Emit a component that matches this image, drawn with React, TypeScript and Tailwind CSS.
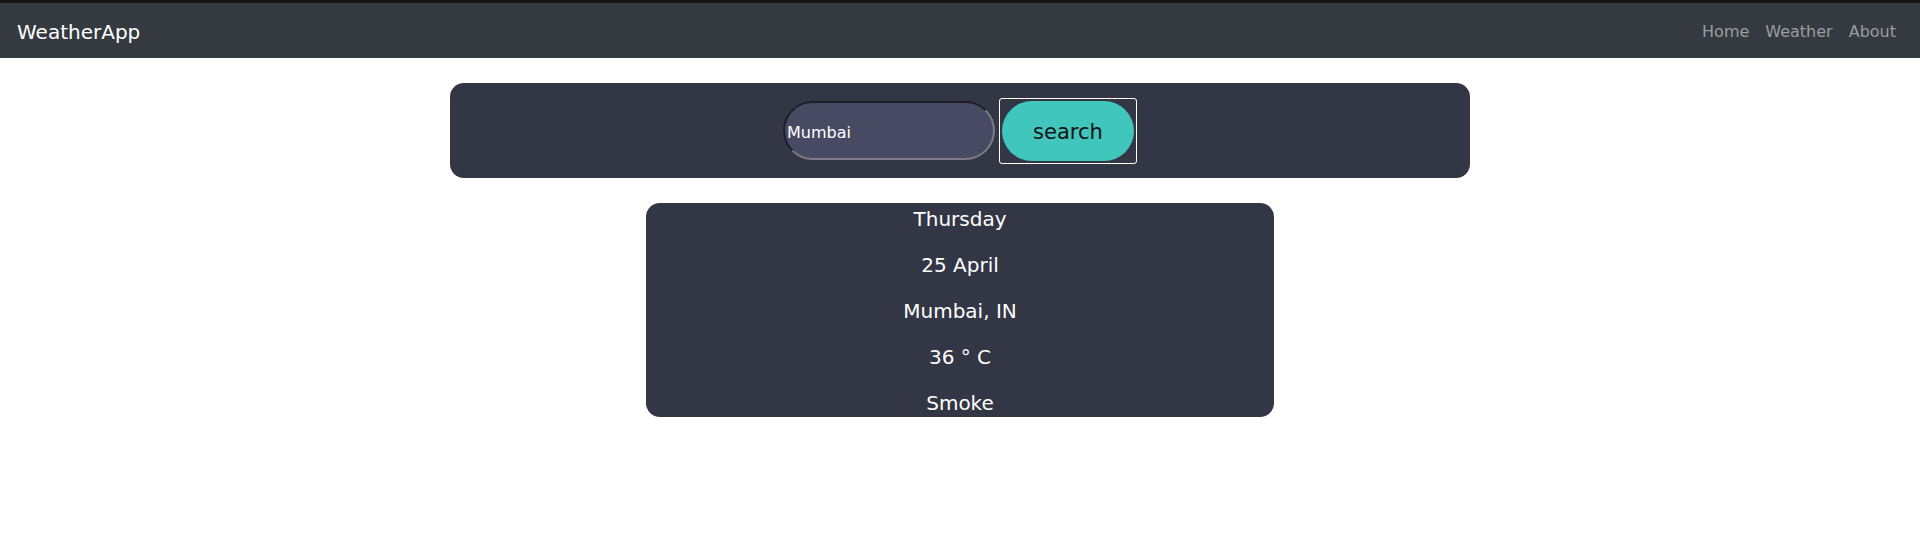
import { useState } from 'react';

const font = { fontFamily: '"DejaVu Sans", Verdana, sans-serif' };

function Navbar() {
  return (
    <nav className="flex h-[55px] items-center justify-between bg-[#343a40] pl-[17px] pr-[24px]">
      <a href="#" className="pt-[2px] text-[20px] text-white">
        WeatherApp
      </a>
      <ul className="flex gap-[16px] pt-[2px] text-[16px] text-[#9a9da0]">
        <li>
          <a href="#">Home</a>
        </li>
        <li>
          <a href="#">Weather</a>
        </li>
        <li>
          <a href="#">About</a>
        </li>
      </ul>
    </nav>
  );
}

function App() {
  const [city, setCity] = useState('Mumbai');
  const weather = {
    day: 'Thursday',
    date: '25 April',
    place: 'Mumbai, IN',
    temp: '36 ° C',
    desc: 'Smoke',
  };

  return (
    <div className="min-h-screen bg-white" style={font}>
      <div className="h-[3px] bg-[#121315]" />
      <Navbar />
      <section className="mx-auto mt-[25px] flex h-[95px] w-[1020px] items-center justify-center gap-[4px] rounded-[14px] bg-[#333645]">
        <input
          type="text"
          value={city}
          onChange={(e) => setCity(e.target.value)}
          className="h-[59px] w-[212px] rounded-full border-2 border-t-[#1e1f28] border-l-[#1e1f28] border-b-[#7a7b84] border-r-[#7a7b84] bg-[#474a62] pl-[2px] pt-[4px] text-[16px] text-white outline-none"
        />
        <button
          type="button"
          className="h-[66px] w-[138px] rounded-[3px] border border-white bg-[#333645] p-[2px]"
        >
          <span className="flex h-full w-full items-center justify-center rounded-full bg-[#40c6bd] pt-[4px] text-[21px] text-[#111]">
            search
          </span>
        </button>
      </section>
      <section className="mx-auto mt-[25px] flex h-[214px] w-[628px] flex-col items-center gap-[16px] overflow-hidden rounded-[14px] bg-[#333645] pt-[1px] text-[20px] leading-[30px] text-white">
        <p>{weather.day}</p>
        <p>{weather.date}</p>
        <p>{weather.place}</p>
        <p>{weather.temp}</p>
        <p>{weather.desc}</p>
      </section>
    </div>
  );
}

export default App;
